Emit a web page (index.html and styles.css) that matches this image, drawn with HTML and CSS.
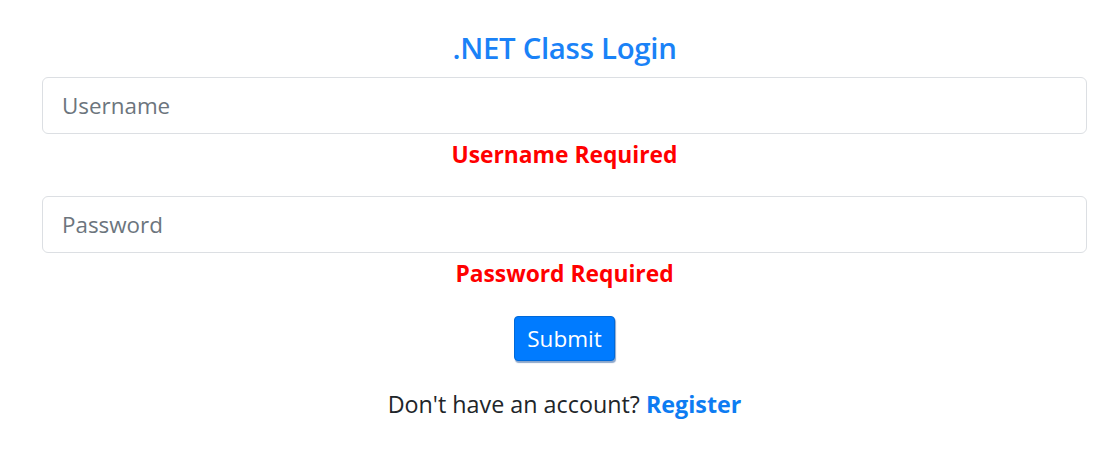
FILE: index.html
```html
<!DOCTYPE html>
<html>
<head>
<meta charset="utf-8">
<link rel="stylesheet" href="styles.css">
</head>
<body>
<main class="login">
  <h1 class="title">.NET Class Login</h1>
  <input class="field" type="text" placeholder="Username">
  <div class="error">Username Required</div>
  <input class="field field-pass" type="password" placeholder="Password">
  <div class="error error-pass">Password Required</div>
  <button class="btn" type="button">Submit</button>
  <p class="register">Don't have an account? <a href="#">Register</a></p>
</main>
</body>
</html>
```

FILE: styles.css
```css
html, body {
  margin: 0;
  padding: 0;
  background: #ffffff;
}
body {
  font-family: "Open Sans", "Noto Sans", sans-serif;
  color: #212529;
}
.login {
  display: flex;
  flex-direction: column;
  align-items: center;
  padding: 28px 24px 0 42px;
}
.title {
  margin: 0;
  font-size: 29.4px;
  font-weight: 600;
  line-height: 40px;
  color: #1a82f7;
  letter-spacing: -0.3px;
}
.field {
  box-sizing: border-box;
  width: 100%;
  height: 57px;
  margin-top: 9px;
  padding: 0 19px;
  border: 1.5px solid #dcdfe3;
  border-radius: 6px;
  font-family: inherit;
  font-size: 22.4px;
  color: #495057;
  background: #fff;
  outline: none;
}
.field::placeholder {
  color: #6c757d;
  opacity: 1;
}
.field-pass {
  margin-top: 25px;
}
.error {
  margin-top: 5px;
  font-size: 22.8px;
  font-weight: 700;
  line-height: 32px;
  color: #ff0000;
}
.btn {
  margin-top: 26px;
  width: 101px;
  height: 45px;
  border: 1px solid #0069d9;
  border-radius: 4px;
  background: #007bff;
  color: #fff;
  font-family: inherit;
  font-size: 22.5px;
  padding: 0;
  box-shadow: 1px 2px 1px rgba(0, 60, 140, 0.45);
  cursor: pointer;
}
.register {
  margin: 27px 0 0;
  font-size: 23.3px;
  line-height: 32px;
  color: #212529;
}
.register a {
  color: #0d7cf2;
  font-weight: 700;
  text-decoration: none;
}
```
